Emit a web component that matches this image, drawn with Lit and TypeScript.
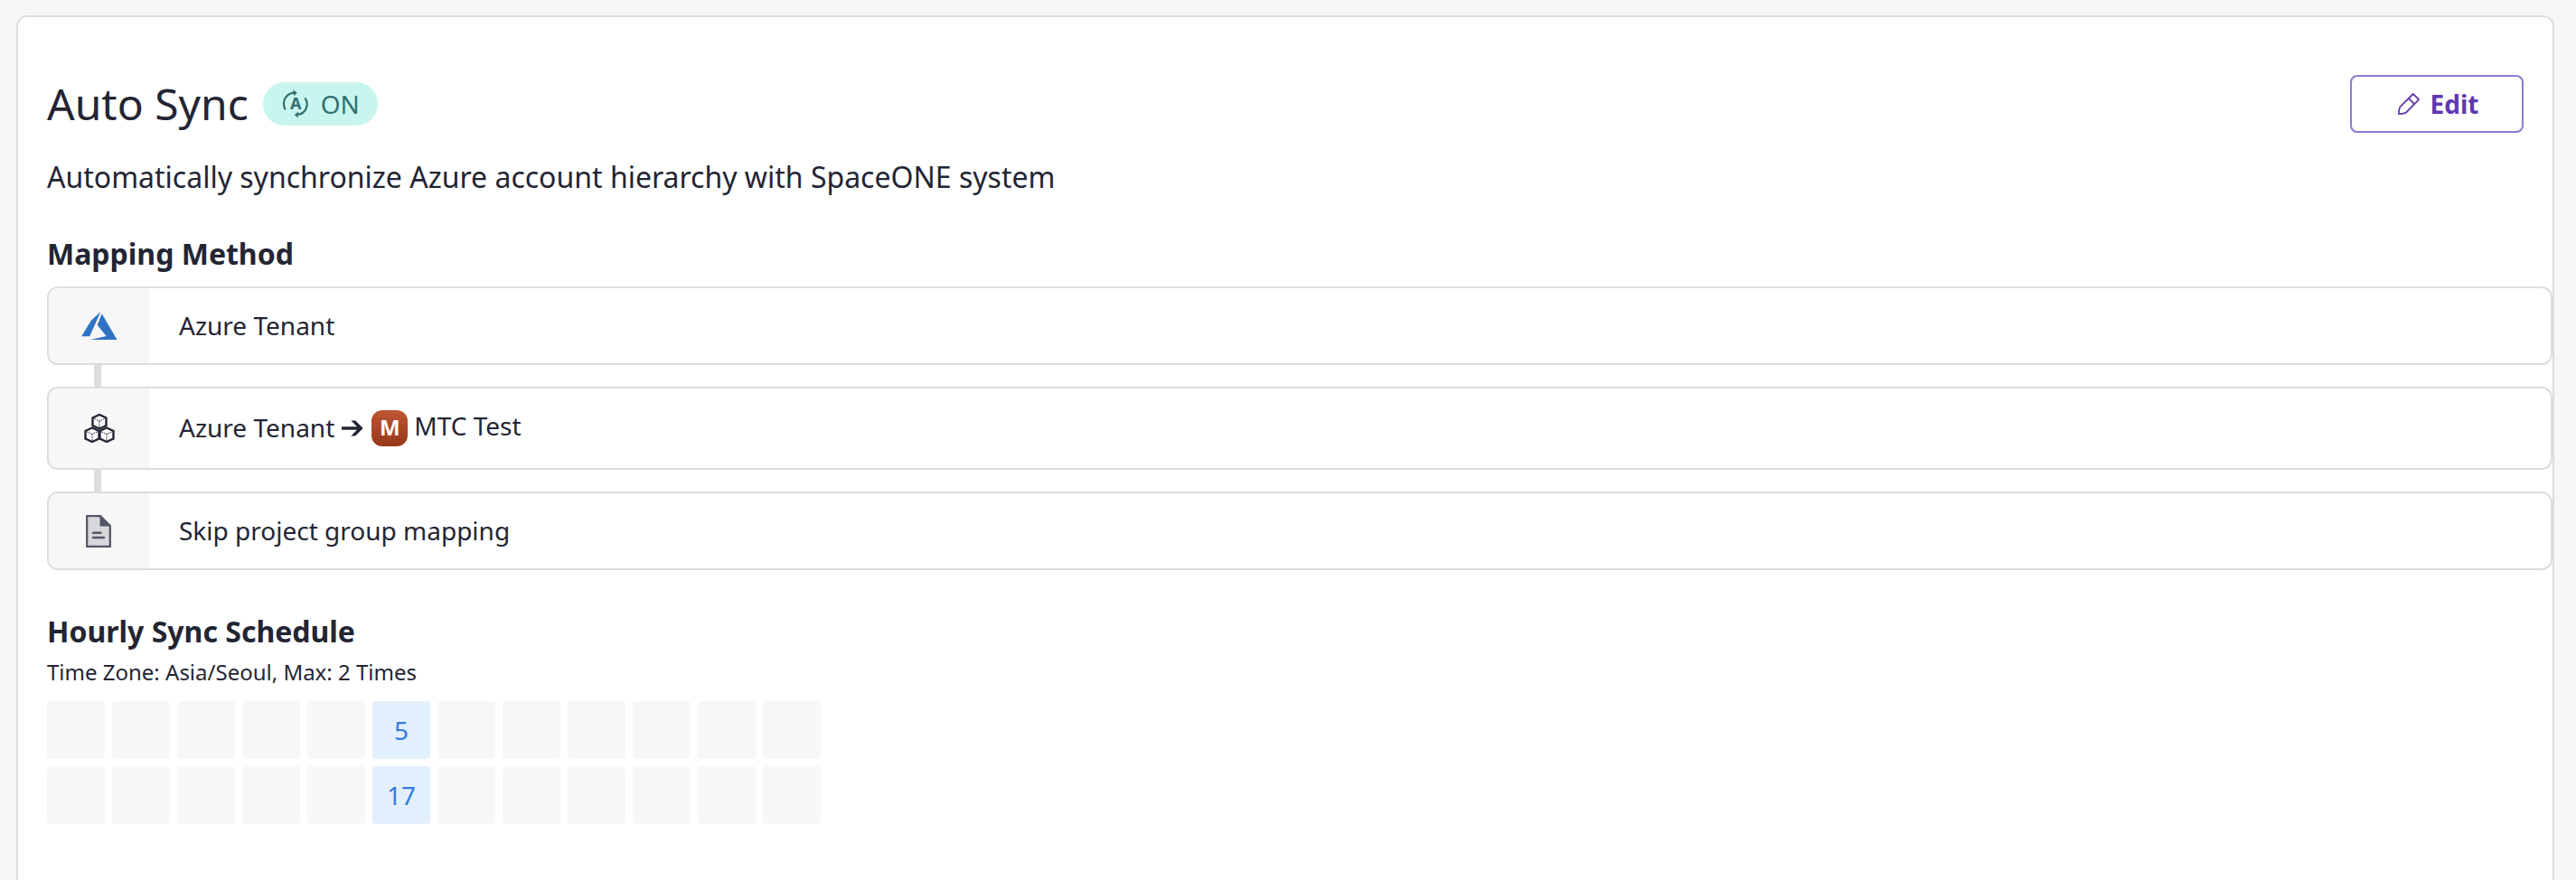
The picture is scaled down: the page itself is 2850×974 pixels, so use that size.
import { LitElement, html, css, svg } from "lit";
import { customElement } from "lit/decorators.js";
import { classMap } from "lit/directives/class-map.js";

const syncIcon = html`<svg class="sync" width="32" height="32" viewBox="0 0 32 32" fill="none" stroke="currentColor" stroke-width="2.200">
  <path d="M4.500 22.300C1.200 15 3 5.500 14 3.700"/>
  <path d="M26.500 9.300C31.500 17 27.500 26.500 18.500 27.800"/>
  <path d="M13 .200l4.800 3.600-3.500 3.400z M19.300 24.500l-4.500 3.400 3.700 3.600z" fill="currentColor" stroke="none"/>
  <text class="letter" x="16.300" y="22.300" text-anchor="middle">A</text>
</svg>`;

const editIcon = html`<svg width="24" height="24" viewBox="0 0 24 24" fill="none" stroke="currentColor" stroke-width="1.800" stroke-linejoin="round">
  <path d="M16.800 1L2.500 15.200C1.200 17 1 20 1 23c3.200 0 6.500-.300 8-1.500L23.200 7.200z"/>
  <path d="M12 6l6.300 6.300"/>
</svg>`;

const azureIcon = html`<svg width="40" height="32" viewBox="0 0 40 32" fill="#2f71c4">
  <path d="M21.300 .2L11 9.500 .2 27.300h9z"/>
  <path d="M22.700 2.200L17.700 14.800 27.600 26.900 10.200 31h29.300z"/>
</svg>`;

const cube = (x: number, y: number) => svg`<g transform=${`translate(${x} ${y})`}>
  <path d="M8.500 1l7.500 3.500v8.500l-7.500 3.500L1 13V4.500z" fill="#fff" stroke-width="2.400"/>
  <path d="M3 5.500l5.500 2.500L14 5.500M8.500 8v7" stroke-width="1" stroke-dasharray="1.600 1"/>
</g>`;

const cubesIcon = html`<svg width="34" height="32" viewBox="0 0 34 32" fill="none" stroke="#232533">
  ${cube(8.5, 0)}${cube(0.5, 14.5)}${cube(16.5, 14.5)}
</svg>`;

const fileIcon = html`<svg class="file" width="28" height="36" viewBox="0 0 28 36">
  <path d="M1.200 1.200h14.800L26.800 12v22.800H1.200z" fill="#d8d8dc" stroke="#545768" stroke-width="2.300"/>
  <path d="M15.500 1l11.500 11.500H15.500z" fill="#545768"/>
  <path d="M8 19.800h8.500M8 25h12" stroke="#545768" stroke-width="2.400" stroke-linecap="round"/>
</svg>`;

const arrowIcon = html`<svg class="arrow" width="24" height="18" viewBox="0 0 24 18" fill="#232533">
  <path d="M10.400 .6h4.800L23.700 9l-8.500 8.400h-4.800L17 10.800H0V7.200h17z"/>
</svg>`;

@customElement("app-root")
export class AppRoot extends LitElement {
  static styles = css`
    :host {
      display: block;
      box-sizing: border-box;
      height: 974px;
      overflow: hidden;
      padding: 17px 24px 0 18px;
      background: #f7f7f7;
      color: #232533;
      font-family: "Noto Sans", sans-serif;
    }
    * { box-sizing: border-box; }
    svg { display: block; flex: none; }
    .card {
      height: 1000px;
      padding: 64px 0 0 32px;
      border: 2px solid #ddd;
      border-radius: 12px;
      background: #fff;
    }
    .header { display: flex; align-items: center; height: 64px; padding-right: 32px; }
    h1, h2, p { margin: 0; }
    h1 { font-size: 48px; font-weight: 400; line-height: 64px; }
    .badge {
      display: flex;
      align-items: center;
      width: 127px;
      height: 48px;
      margin-left: 16px;
      padding-left: 20px;
      gap: 12px;
      border-radius: 24px;
      background: #c8f6ee;
      color: #33706f;
      font-size: 28px;
      line-height: 40px;
    }
    .letter { fill: currentColor; stroke: none; font-size: 18px; font-weight: 700; }
    .edit {
      display: flex;
      align-items: center;
      justify-content: center;
      gap: 12px;
      width: 192px;
      height: 64px;
      margin-left: auto;
      padding: 0 0 0 3px;
      border: 2px solid #8b7ad2;
      border-radius: 8px;
      background: #fff;
      color: #6039ae;
      font: 700 28px/40px "Noto Sans", sans-serif;
    }
    .description { margin-top: 25px; font-size: 32px; line-height: 48px; }
    h2 { font-size: 32px; font-weight: 700; line-height: 48px; }
    .mapping-title { margin-top: 37px; }
    .mapping { display: flex; flex-direction: column; margin-top: 12px; }
    .row {
      display: flex;
      height: 87px;
      overflow: hidden;
      border: 2px solid #ddd;
      border-radius: 12px;
      font-size: 28px;
      line-height: 40px;
    }
    .row.tall { height: 92px; }
    .icon { display: flex; align-items: center; justify-content: center; width: 112px; background: #f7f7f7; }
    .file { margin-right: 2px; }
    .content { display: flex; align-items: center; padding-left: 32px; }
    .label { padding-bottom: 2px; }
    .link { width: 8px; height: 24px; margin-left: 52px; background: #ddd; }
    .arrow { margin: 0 9px 0 8px; }
    .avatar {
      width: 40px;
      height: 40px;
      margin-right: 7px;
      border-radius: 12px;
      background: linear-gradient(#bf5634, #97371a);
      color: #fff;
      font-size: 24px;
      font-weight: 700;
      line-height: 38px;
      text-align: center;
    }
    .workspace { padding-bottom: 6px; }
    .schedule-title { margin-top: 44px; }
    .zone { margin-top: 5px; font-size: 24px; line-height: 32px; }
    .hours { display: grid; grid-template-columns: repeat(12, 64px); grid-auto-rows: 64px; gap: 8px; margin-top: 16px; }
    .hour { border-radius: 4px; background: #f7f7f7; font-size: 28px; line-height: 64px; text-align: center; }
    .hour.on { background: #e2f0fe; color: #357ae0; }
  `;

  private selected = [5, 17];

  render() {
    return html`<main class="card">
      <header class="header">
        <h1>Auto Sync</h1>
        <span class="badge">${syncIcon}<span>ON</span></span>
        <button class="edit">${editIcon}<span>Edit</span></button>
      </header>
      <p class="description">Automatically synchronize Azure account hierarchy with SpaceONE system</p>
      <h2 class="mapping-title">Mapping Method</h2>
      <section class="mapping">
        <div class="row">
          <div class="icon">${azureIcon}</div>
          <div class="content"><span class="label">Azure Tenant</span></div>
        </div>
        <div class="link"></div>
        <div class="row tall">
          <div class="icon">${cubesIcon}</div>
          <div class="content">
            <span class="label">Azure Tenant</span>${arrowIcon}<span class="avatar">M</span><span class="workspace">MTC Test</span>
          </div>
        </div>
        <div class="link"></div>
        <div class="row">
          <div class="icon">${fileIcon}</div>
          <div class="content"><span class="label">Skip project group mapping</span></div>
        </div>
      </section>
      <h2 class="schedule-title">Hourly Sync Schedule</h2>
      <p class="zone">Time Zone: Asia/Seoul, Max: 2 Times</p>
      <div class="hours">
        ${Array.from({ length: 24 }, (_, h) => {
          const on = this.selected.includes(h);
          return html`<div class=${classMap({ hour: true, on })}>${on ? h : ""}</div>`;
        })}
      </div>
    </main>`;
  }
}
